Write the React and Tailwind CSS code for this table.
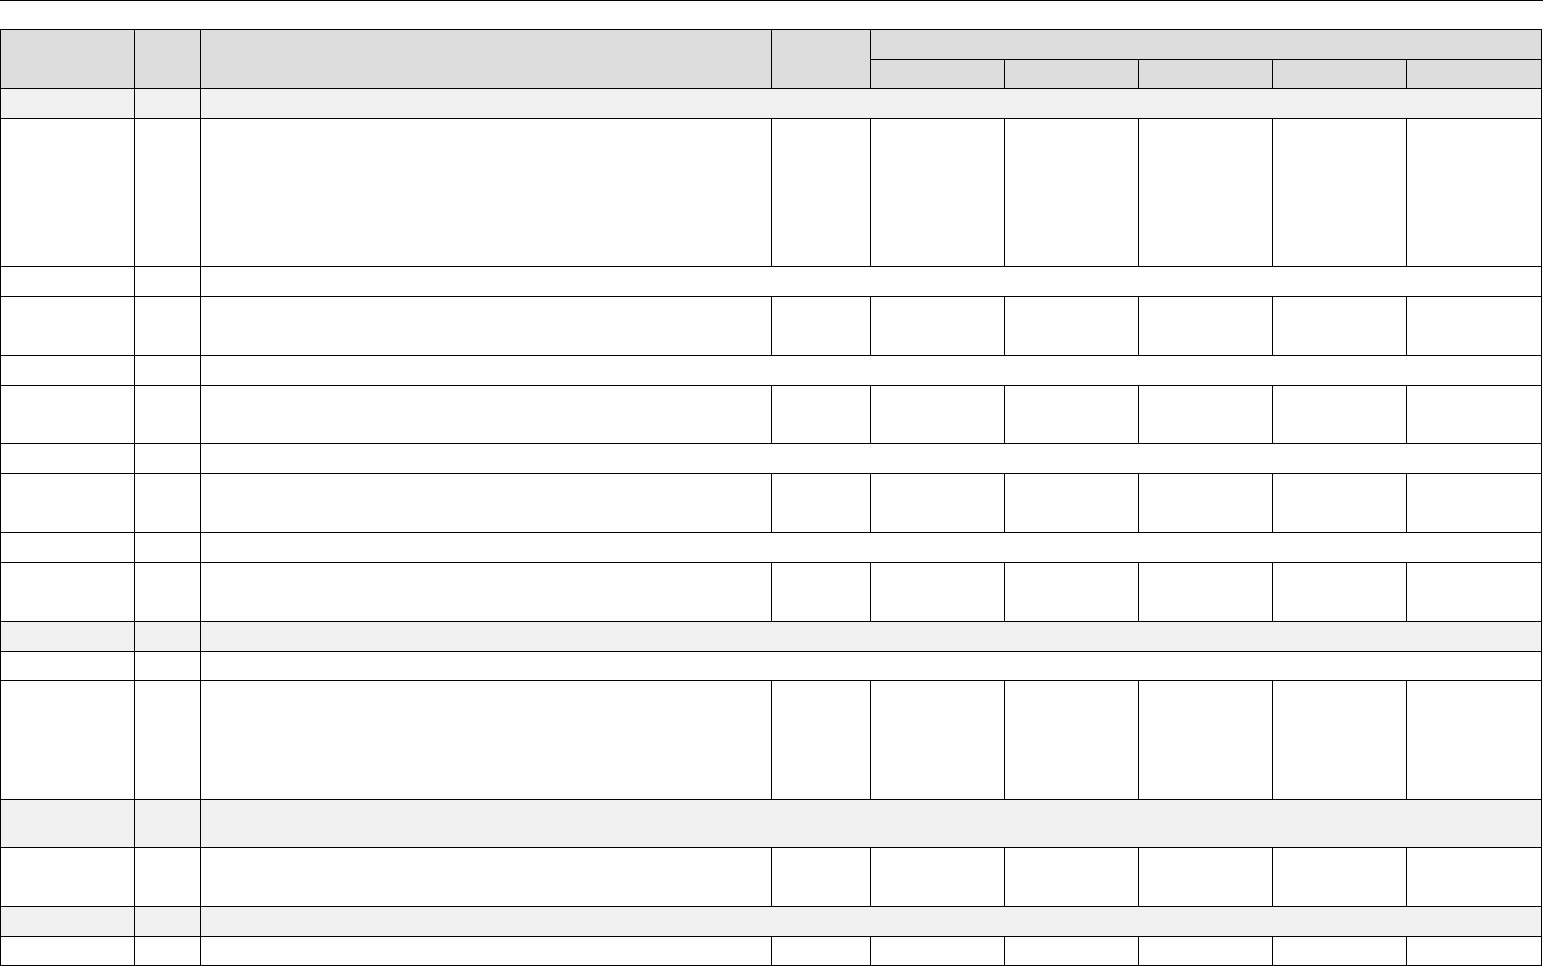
import React from 'react';

const widths = [134, 66, 571, 99, 134, 134, 134, 134, 135];

// kind: 'span' = group row (two cells + one wide cell), 'full' = every column
const rows = [
  { kind: 'span', h: 30, gray: true },
  { kind: 'full', h: 148 },
  { kind: 'span', h: 30 },
  { kind: 'full', h: 59 },
  { kind: 'span', h: 30 },
  { kind: 'full', h: 58 },
  { kind: 'span', h: 30 },
  { kind: 'full', h: 59 },
  { kind: 'span', h: 30 },
  { kind: 'full', h: 59 },
  { kind: 'span', h: 30, gray: true },
  { kind: 'span', h: 29 },
  { kind: 'full', h: 119 },
  { kind: 'span', h: 48, gray: true },
  { kind: 'full', h: 59 },
  { kind: 'span', h: 30, gray: true },
  { kind: 'full', h: 29 },
];

const cell = 'border border-black p-0';

export default function App() {
  return (
    <div className="min-h-screen bg-white font-['Liberation_Sans',sans-serif] text-[13px] text-black">
      <div className="w-[1543px] border-t border-black" />
      <div className="pt-[28px]">
        <table className="w-[1541px] table-fixed border-collapse">
          <colgroup>
            {widths.map((w, i) => (
              <col key={i} style={{ width: w }} />
            ))}
          </colgroup>
          <thead>
            <tr className="h-[30px] bg-[#dcdcdc]">
              <th rowSpan={2} className={cell}></th>
              <th rowSpan={2} className={cell}></th>
              <th rowSpan={2} className={cell}></th>
              <th rowSpan={2} className={cell}></th>
              <th colSpan={5} className={cell}></th>
            </tr>
            <tr className="h-[29px] bg-[#dcdcdc]">
              <th className={cell}></th>
              <th className={cell}></th>
              <th className={cell}></th>
              <th className={cell}></th>
              <th className={cell}></th>
            </tr>
          </thead>
          <tbody>
            {rows.map((r, i) =>
              r.kind === 'span' ? (
                <tr key={i} style={{ height: r.h }} className={r.gray ? 'bg-[#f0f0f0]' : 'bg-white'}>
                  <td className={cell}></td>
                  <td className={cell}></td>
                  <td colSpan={7} className={cell}></td>
                </tr>
              ) : (
                <tr key={i} style={{ height: r.h }} className="bg-white">
                  {widths.map((_, j) => (
                    <td key={j} className={cell}></td>
                  ))}
                </tr>
              )
            )}
          </tbody>
        </table>
      </div>
    </div>
  );
}
